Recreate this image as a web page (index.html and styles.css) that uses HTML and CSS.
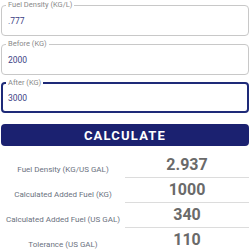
FILE: index.html
```html
<!DOCTYPE html>
<html>
<head>
<meta charset="utf-8">
<link rel="stylesheet" href="styles.css">
</head>
<body>
<div class="page">
  <fieldset class="field">
    <legend class="field-label">Fuel Density (KG/L)</legend>
    <div class="field-value">.777</div>
  </fieldset>
  <fieldset class="field">
    <legend class="field-label">Before (KG)</legend>
    <div class="field-value">2000</div>
  </fieldset>
  <fieldset class="field field-focused">
    <legend class="field-label">After (KG)</legend>
    <div class="field-value">3000</div>
  </fieldset>
  <button class="calc-btn">CALCULATE</button>
  <div class="results">
    <div class="res-label">Fuel Density (KG/US GAL)</div>
    <div class="res-value">2.937</div>
    <div class="res-label">Calculated Added Fuel (KG)</div>
    <div class="res-value">1000</div>
    <div class="res-label">Calculated Added Fuel (US GAL)</div>
    <div class="res-value">340</div>
    <div class="res-label">Tolerance (US GAL)</div>
    <div class="res-value">110</div>
  </div>
</div>
</body>
</html>
```

FILE: styles.css
```css
html, body {
  margin: 0;
  padding: 0;
  background: #fff;
}
body {
  font-family: Roboto, "Liberation Sans", sans-serif;
}
.page {
  width: 250px;
  padding: 0 1px;
  box-sizing: border-box;
  display: flex;
  flex-direction: column;
}
.field {
  margin: 0 0 3px 0;
  padding: 0 5px 0 5px;
  border: 1px solid #c8c8c8;
  border-radius: 4px;
  min-width: 0;
}
.field-focused {
  border: 2px solid #1e2a78;
  padding: 0 4px;
}
.field-label {
  font-size: 7.5px;
  line-height: 10px;
  color: #8a8a8a;
  padding: 0 2px;
  margin-left: -1px;
}
.field-value {
  font-size: 8.5px;
  line-height: 14px;
  color: #3d3f85;
  padding: 4px 1px 7px;
}
.field-focused .field-value {
  padding: 3px 1px 6px;
}
.calc-btn {
  margin-top: 8px;
  height: 22px;
  border: none;
  border-radius: 4px;
  background: #1b2170;
  color: #fff;
  font-family: Roboto, "Liberation Sans", sans-serif;
  font-weight: 700;
  font-size: 13px;
  letter-spacing: 1.2px;
  padding: 0;
}
.results {
  margin-top: 7px;
  display: grid;
  grid-template-columns: 124px 124px;
  grid-auto-rows: 25px;
}
.res-label {
  font-size: 8px;
  color: #6b7280;
  text-align: center;
  white-space: nowrap;
  line-height: 25px;
  padding-top: 4px;
  box-sizing: border-box;
}
.res-value {
  font-size: 16px;
  font-weight: 700;
  color: #6a6a6a;
  text-align: center;
  line-height: 24px;
  border-bottom: 1px solid #dcdcdc;
}
```
